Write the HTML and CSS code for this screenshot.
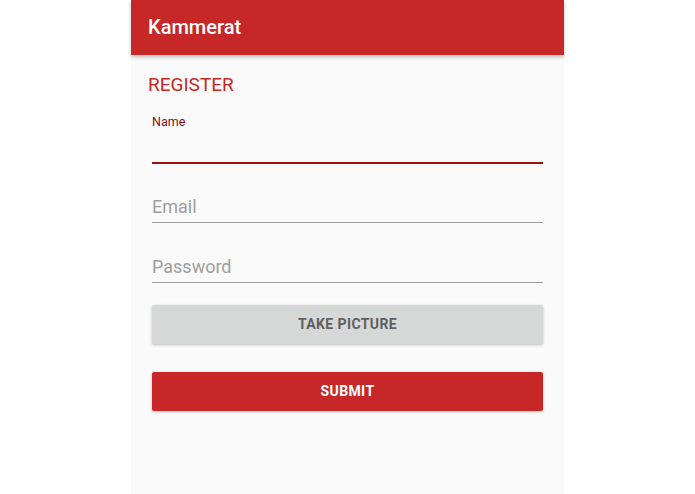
FILE: index.html
```html
<!DOCTYPE html>
<html>
<head>
<meta charset="utf-8">
<link rel="stylesheet" href="styles.css">
</head>
<body>
<div class="app">
  <header class="appbar"><span class="title">Kammerat</span></header>
  <main class="content">
    <h2 class="heading">REGISTER</h2>
    <form class="form">
      <div class="field focused">
        <label class="label">Name</label>
        <div class="input"></div>
      </div>
      <div class="field field-email">
        <div class="input placeholder">Email</div>
      </div>
      <div class="field field-password">
        <div class="input placeholder">Password</div>
      </div>
      <button type="button" class="btn btn-gray">TAKE PICTURE</button>
      <button type="button" class="btn btn-red">SUBMIT</button>
    </form>
  </main>
</div>
</body>
</html>
```
FILE: styles.css
```css
html, body {
  margin: 0;
  padding: 0;
  background: #ffffff;
  font-family: Roboto, "Liberation Sans", sans-serif;
}
.app {
  width: 433px;
  height: 494px;
  margin-left: 131px;
  background: #fafafa;
  display: flex;
  flex-direction: column;
}
.appbar {
  height: 55px;
  background: #c62828;
  box-shadow: 0 2px 4px rgba(0,0,0,0.25);
  display: flex;
  align-items: center;
  padding-left: 17px;
  position: relative;
  z-index: 1;
}
.title {
  color: #ffffff;
  font-size: 20px;
  font-weight: 500;
  line-height: 24px;
  margin-top: -2px;
}
.content {
  padding: 0 21px 0 17px;
}
.heading {
  margin: 19px 0 0 0;
  font-size: 19px;
  font-weight: 400;
  line-height: 22px;
  color: #c62828;
}
.form {
  padding-left: 4px;
  display: flex;
  flex-direction: column;
}
.field {
  display: flex;
  flex-direction: column;
}
.label {
  margin-top: 18px;
  font-size: 12.5px;
  line-height: 16px;
  font-weight: 400;
  color: #8b0a0a;
}
.field.focused .input {
  height: 32px;
  border-bottom: 2px solid #9b1010;
}
.input {
  border-bottom: 1.5px solid #9e9e9e;
}
.placeholder {
  font-size: 18px;
  line-height: 24px;
  color: #9e9e9e;
  height: 27px;
  box-sizing: content-box;
}
.field-email {
  margin-top: 31px;
}
.field-password {
  margin-top: 31.5px;
}
.btn {
  height: 39px;
  border: none;
  border-radius: 2px;
  font-family: Roboto, "Liberation Sans", sans-serif;
  font-size: 14px;
  font-weight: 700;
  letter-spacing: 0.4px;
  box-shadow: 0 1px 3px rgba(0,0,0,0.25);
  padding: 0;
}
.btn-gray {
  margin-top: 22px;
  background: #d6d7d7;
  color: #5f5f5f;
}
.btn-red {
  margin-top: 28px;
  background: #c62828;
  color: #ffffff;
}
```
